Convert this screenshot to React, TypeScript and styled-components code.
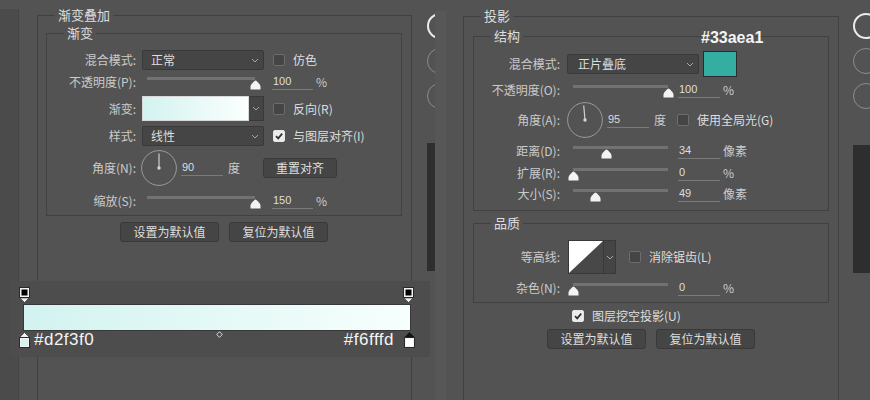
import styled, { createGlobalStyle } from "styled-components";

const colors = {
    page: "#535353",
    edge: "#4b4b4b",
    edgeLine: "#444444",
    band: "#575757",
    groupLine: "#414141",
    field: "#454545",
    fieldLine: "#393939",
    label: "#cbcbcb",
    text: "#dedede",
    track: "#727272",
    underline: "#7a7a7a",
    dial: "#9a9a9a",
    checkLine: "#6d6d6d",
    railBar: "#2e2e2e",
    editor: "#4d4d4d",
    white: "#f4f4f4",
};

const GlobalStyle = createGlobalStyle`
    html, body {
        margin: 0;
        padding: 0;
        background: ${colors.page};
    }
    body {
        font-family: "Noto Sans CJK SC", "Liberation Sans", sans-serif;
    }
`;

const Screen = styled.div`
    position: relative;
    display: flex;
    width: 870px;
    height: 400px;
    overflow: hidden;
    background: ${colors.page};
    font-family: "Noto Sans CJK SC", "Liberation Sans", sans-serif;
    font-size: 12px;
    line-height: 16px;
    color: ${colors.label};
`;

const EdgeStrip = styled.div`
    flex: none;
    width: 18px;
    margin-top: 9px;
    background: ${colors.edge};
    border-right: 1px solid ${colors.edgeLine};
`;

const Pane = styled.div<{ $w: number; $pl: number; $pt: number }>`
    flex: none;
    box-sizing: border-box;
    width: ${(p) => p.$w}px;
    padding-left: ${(p) => p.$pl}px;
    padding-top: ${(p) => p.$pt}px;
`;

const Band = styled.div`
    flex: none;
    width: 11px;
    margin-top: 11px;
    background: ${colors.band};
`;

/* strip of round layer-style buttons cut off by the window edge */
const Rail = styled.div<{ $w: number; $pl: number }>`
    flex: none;
    box-sizing: border-box;
    width: ${(p) => p.$w}px;
    padding-left: ${(p) => p.$pl}px;
    padding-top: 13px;
    overflow: hidden;
    display: flex;
    flex-direction: column;
    gap: 9px;
`;

const Ring = styled.span<{ $bright?: boolean }>`
    flex: none;
    box-sizing: border-box;
    width: 26px;
    height: 26px;
    border-radius: 50%;
    border: ${(p) => (p.$bright ? "2px solid #ececec" : "1px solid #8c8c8c")};
`;

const RailBar = styled.span<{ $mt: number }>`
    flex: none;
    width: 24px;
    height: 128px;
    margin-top: ${(p) => p.$mt}px;
    background: ${colors.railBar};
`;

const Group = styled.fieldset<{ $w: number; $h?: number; $mt?: number }>`
    box-sizing: border-box;
    width: ${(p) => p.$w}px;
    ${(p) => (p.$h ? `height: ${p.$h}px;` : "")}
    margin: ${(p) => p.$mt ?? 0}px 0 0 0;
    padding: 0;
    min-width: 0;
    border: 1px solid ${colors.groupLine};
`;

const Legend = styled.legend`
    margin-left: 17px;
    padding: 0 3px;
    font-size: 13px;
    line-height: 16px;
    color: ${colors.text};
`;

const Body = styled.div<{ $pad: string }>`
    padding: ${(p) => p.$pad};
`;

const Row = styled.div<{ $h: number }>`
    display: flex;
    align-items: center;
    height: ${(p) => p.$h}px;
`;

const Label = styled.span<{ $w: number }>`
    flex: none;
    width: ${(p) => p.$w}px;
    text-align: right;
    white-space: nowrap;
`;

const Select = styled.div<{ $w: number; $ml: number; $pl: number }>`
    flex: none;
    box-sizing: border-box;
    display: flex;
    align-items: center;
    justify-content: space-between;
    width: ${(p) => p.$w}px;
    height: 20px;
    margin-left: ${(p) => p.$ml}px;
    padding: 0 4px 0 ${(p) => p.$pl}px;
    background: ${colors.field};
    border: 1px solid ${colors.fieldLine};
    border-radius: 2px;
    color: ${colors.text};
`;

const SliderBox = styled.div<{ $w: number; $ml: number }>`
    position: relative;
    flex: none;
    width: ${(p) => p.$w}px;
    height: 13px;
    margin-left: ${(p) => p.$ml}px;
    margin-top: 3px;
`;

const Track = styled.div`
    height: 3px;
    background: ${colors.track};
`;

const Thumb = styled.svg`
    position: absolute;
    top: 3px;
    margin-left: -5.5px;
`;

const Value = styled.span<{ $w: number; $ml: number }>`
    flex: none;
    box-sizing: border-box;
    width: ${(p) => p.$w}px;
    height: 16px;
    margin-left: ${(p) => p.$ml}px;
    padding-left: 1px;
    border-bottom: 1px solid ${colors.underline};
    font-family: "Liberation Sans", "Noto Sans CJK SC", sans-serif;
    font-size: 11px;
    line-height: 15px;
    color: ${colors.text};
`;

const Unit = styled.span<{ $ml: number }>`
    flex: none;
    margin-left: ${(p) => p.$ml}px;
    white-space: nowrap;
`;

const Box = styled.span<{ $on?: boolean; $ml: number }>`
    flex: none;
    box-sizing: border-box;
    display: flex;
    align-items: center;
    justify-content: center;
    width: 12px;
    height: 12px;
    margin-left: ${(p) => p.$ml}px;
    border-radius: 2px;
    border: 1px solid ${(p) => (p.$on ? "#e6e6e6" : colors.checkLine)};
    background: ${(p) => (p.$on ? "#ececec" : colors.field)};
`;

const CheckText = styled.span`
    flex: none;
    margin-left: 8px;
    white-space: nowrap;
    color: ${colors.text};
`;

const DialSvg = styled.svg<{ $ml: number }>`
    flex: none;
    margin-left: ${(p) => p.$ml}px;
`;

const Button = styled.button<{ $w: number; $ml?: number }>`
    flex: none;
    box-sizing: border-box;
    width: ${(p) => p.$w}px;
    height: 20px;
    margin: 0 0 0 ${(p) => p.$ml ?? 0}px;
    padding: 0;
    background: ${colors.field};
    border: 1px solid ${colors.fieldLine};
    border-radius: 3px;
    font-family: inherit;
    font-size: 12px;
    line-height: 18px;
    color: ${colors.text};
`;

const ButtonRow = styled.div`
    display: flex;
    justify-content: center;
    gap: 10px;
    margin-top: 6px;
`;

const CheckRow = styled.div<{ $pl: number }>`
    display: flex;
    align-items: center;
    height: 14px;
    margin-top: 6px;
    padding-left: ${(p) => p.$pl}px;
`;

const GradientPicker = styled.div`
    flex: none;
    display: flex;
    width: 122px;
    height: 25px;
    margin-left: 6px;
`;

const GradientFill = styled.div`
    flex: 1;
    border: 1px solid #d8d8d8;
    background: linear-gradient(to right, #d2f3f0, #fbfffe);
`;

const DropPart = styled.div<{ $w: number }>`
    flex: none;
    display: flex;
    align-items: center;
    justify-content: center;
    width: ${(p) => p.$w}px;
    background: ${colors.field};
    border: 1px solid ${colors.fieldLine};
    border-left: none;
`;

const SwatchWrap = styled.div`
    position: relative;
    flex: none;
    margin-left: 4px;
`;

const Swatch = styled.div<{ $color: string }>`
    box-sizing: border-box;
    width: 34px;
    height: 26px;
    background: ${(p) => p.$color};
    border: 1px solid #2c2c2c;
`;

const HexNote = styled.span<{ $size: number }>`
    font-family: "Liberation Sans", "DejaVu Sans", sans-serif;
    font-size: ${(p) => p.$size}px;
    line-height: 16px;
    color: ${colors.white};
    white-space: nowrap;
`;

const SwatchNote = styled(HexNote)`
    position: absolute;
    left: -2px;
    bottom: 100%;
    margin-bottom: 5px;
    font-weight: 700;
`;

const Contour = styled.div`
    flex: none;
    display: flex;
    height: 34px;
    margin-left: 8px;
`;

const ContourArt = styled.svg`
    display: block;
    border: 1px solid ${colors.fieldLine};
`;

/* gradient editor strip floating over the left dialog */
const Editor = styled.div`
    position: absolute;
    left: 10px;
    top: 281px;
    box-sizing: border-box;
    width: 420px;
    height: 76px;
    padding-top: 6px;
    background: ${colors.editor};
`;

const StopRow = styled.div<{ $pl: number; $pr: number; $mt?: number }>`
    display: flex;
    align-items: center;
    height: 16px;
    margin-top: ${(p) => p.$mt ?? 0}px;
    padding: 0 ${(p) => p.$pr}px 0 ${(p) => p.$pl}px;
`;

const StopGap = styled.span`
    flex: 1;
`;

const Bar = styled.div`
    box-sizing: border-box;
    width: 388px;
    height: 27px;
    margin: 1px 0 0 13px;
    border: 1px solid #383838;
    background: linear-gradient(to right, #d2f3f0, #f6fffd);
`;

const Mid = styled.svg`
    align-self: flex-start;
    margin-top: -1px;
`;

const Chevron = () => (
    <svg width="8" height="5" viewBox="0 0 8 5">
        <path d="M1 1 L4 4 L7 1" fill="none" stroke="#a6a6a6" strokeWidth="1" />
    </svg>
);

const Tick = () => (
    <svg width="10" height="10" viewBox="0 0 10 10">
        <path d="M2 5.2 L4.2 7.4 L8.2 2.6" fill="none" stroke="#2f2f2f" strokeWidth="1.7" />
    </svg>
);

const Check = ({ on, ml, text }: { on?: boolean; ml: number; text: string }) => (
    <>
        <Box $on={on} $ml={ml}>{on && <Tick />}</Box>
        <CheckText>{text}</CheckText>
    </>
);

const Slider = ({ w, ml, pos }: { w: number; ml: number; pos: number }) => (
    <SliderBox $w={w} $ml={ml}>
        <Track />
        <Thumb width="11" height="10" viewBox="0 0 11 10" style={{ left: `${pos * 100}%` }}>
            <path
                d="M5.5 0.6 C6.6 0.6 10.5 5 10.5 6.4 V9.6 H0.5 V6.4 C0.5 5 4.4 0.6 5.5 0.6 Z"
                fill="#f3f3f3"
            />
        </Thumb>
    </SliderBox>
);

const Dial = ({ angle, ml }: { angle: number; ml: number }) => {
    const rad = (angle * Math.PI) / 180;
    const x = 18 + 14.5 * Math.cos(rad);
    const y = 18 - 14.5 * Math.sin(rad);
    return (
        <DialSvg $ml={ml} width="36" height="36" viewBox="0 0 36 36">
            <circle cx="18" cy="18" r="17.4" fill="none" stroke={colors.dial} strokeWidth="1" />
            <line x1="18" y1="18" x2={x} y2={y} stroke="#cfcfcf" strokeWidth="1.2" />
            <circle cx="18" cy="18" r="1.7" fill="#d6d6d6" />
        </DialSvg>
    );
};

const TopStop = () => (
    <svg width="11" height="16" viewBox="0 0 11 16">
        <rect x="0.5" y="0.5" width="10" height="10" fill="#f2f2f2" stroke="#2a2a2a" />
        <rect x="2.5" y="2.5" width="6" height="6" fill="#000" />
        <path d="M1 11 H10 L5.5 15.5 Z" fill="#f2f2f2" stroke="#2a2a2a" strokeWidth="0.6" />
    </svg>
);

const BottomStop = ({ fill, active, ml }: { fill: string; active?: boolean; ml?: number }) => (
    <svg width="11" height="16" viewBox="0 0 11 16" style={{ marginLeft: ml ?? 0, flex: "none" }}>
        <path
            d="M5.5 0.5 L10.5 5.5 H0.5 Z"
            fill={active ? "#111" : "#f2f2f2"}
            stroke={active ? "#111" : "#2a2a2a"}
            strokeWidth="0.6"
        />
        <rect x="0.5" y="5.5" width="10" height="10" fill="#f2f2f2" stroke="#2a2a2a" />
        <rect x="2" y="7" width="7" height="7" fill={fill} />
    </svg>
);

export default function App() {
    return (
        <>
            <GlobalStyle />
            <Screen>
                <EdgeStrip />

                <Pane $w={408} $pl={18} $pt={7}>
                    <Group $w={375} $h={440}>
                        <Legend>渐变叠加</Legend>
                        <Body $pad="0 9px 0 8px">
                            <Group $w={356} $mt={2}>
                                <Legend>渐变</Legend>
                                <Body $pad="9px 0 0 0">
                                    <Row $h={20}>
                                        <Label $w={89}>混合模式:</Label>
                                        <Select $w={122} $ml={6} $pl={8}>
                                            正常
                                            <Chevron />
                                        </Select>
                                        <Check ml={9} text="仿色" />
                                    </Row>
                                    <Row $h={24}>
                                        <Label $w={89}>不透明度(P):</Label>
                                        <Slider w={108} ml={11} pos={1} />
                                        <Value $w={41} $ml={17}>100</Value>
                                        <Unit $ml={3}>%</Unit>
                                    </Row>
                                    <Row $h={29}>
                                        <Label $w={89}>渐变:</Label>
                                        <GradientPicker>
                                            <GradientFill />
                                            <DropPart $w={14}>
                                                <Chevron />
                                            </DropPart>
                                        </GradientPicker>
                                        <Check ml={9} text="反向(R)" />
                                    </Row>
                                    <Row $h={26}>
                                        <Label $w={89}>样式:</Label>
                                        <Select $w={122} $ml={6} $pl={8}>
                                            线性
                                            <Chevron />
                                        </Select>
                                        <Check on ml={9} text="与图层对齐(I)" />
                                    </Row>
                                    <Row $h={38}>
                                        <Label $w={89}>角度(N):</Label>
                                        <Dial angle={90} ml={5} />
                                        <Value $w={42} $ml={4}>90</Value>
                                        <Unit $ml={5}>度</Unit>
                                        <Button $w={74} $ml={23}>重置对齐</Button>
                                    </Row>
                                    <Row $h={28}>
                                        <Label $w={89}>缩放(S):</Label>
                                        <Slider w={108} ml={11} pos={1} />
                                        <Value $w={41} $ml={17}>150</Value>
                                        <Unit $ml={3}>%</Unit>
                                    </Row>
                                </Body>
                            </Group>
                            <ButtonRow>
                                <Button $w={99}>设置为默认值</Button>
                                <Button $w={99}>复位为默认值</Button>
                            </ButtonRow>
                        </Body>
                    </Group>
                </Pane>

                <Rail $w={8} $pl={0}>
                    <Ring $bright />
                    <Ring />
                    <Ring />
                    <RailBar $mt={25} />
                </Rail>

                <Band />

                <Pane $w={393} $pl={17} $pt={8}>
                    <Group $w={376} $h={440}>
                        <Legend>投影</Legend>
                        <Body $pad="0 9px 0 9px">
                            <Group $w={356} $mt={4}>
                                <Legend>结构</Legend>
                                <Body $pad="7px 0 4px 0">
                                    <Row $h={26}>
                                        <Label $w={86}>混合模式:</Label>
                                        <Select $w={132} $ml={7} $pl={10}>
                                            正片叠底
                                            <Chevron />
                                        </Select>
                                        <SwatchWrap>
                                            <SwatchNote $size={16}>#33aea1</SwatchNote>
                                            <Swatch $color="#33aea1" />
                                        </SwatchWrap>
                                    </Row>
                                    <Row $h={25}>
                                        <Label $w={86}>不透明度(O):</Label>
                                        <Slider w={95} ml={13} pos={1} />
                                        <Value $w={42} $ml={10}>100</Value>
                                        <Unit $ml={3}>%</Unit>
                                    </Row>
                                    <Row $h={36}>
                                        <Label $w={86}>角度(A):</Label>
                                        <Dial angle={95} ml={7} />
                                        <Value $w={42} $ml={4}>95</Value>
                                        <Unit $ml={5}>度</Unit>
                                        <Check ml={11} text="使用全局光(G)" />
                                    </Row>
                                    <Row $h={26}>
                                        <Label $w={86}>距离(D):</Label>
                                        <Slider w={95} ml={13} pos={0.35} />
                                        <Value $w={42} $ml={10}>34</Value>
                                        <Unit $ml={3}>像素</Unit>
                                    </Row>
                                    <Row $h={18}>
                                        <Label $w={86}>扩展(R):</Label>
                                        <Slider w={95} ml={13} pos={0} />
                                        <Value $w={42} $ml={10}>0</Value>
                                        <Unit $ml={3}>%</Unit>
                                    </Row>
                                    <Row $h={24}>
                                        <Label $w={86}>大小(S):</Label>
                                        <Slider w={95} ml={13} pos={0.24} />
                                        <Value $w={42} $ml={10}>49</Value>
                                        <Unit $ml={3}>像素</Unit>
                                    </Row>
                                </Body>
                            </Group>
                            <Group $w={356} $mt={4}>
                                <Legend>品质</Legend>
                                <Body $pad="9px 0 0 0">
                                    <Row $h={34}>
                                        <Label $w={86}>等高线:</Label>
                                        <Contour>
                                            <ContourArt width="34" height="32" viewBox="0 0 34 32">
                                                <rect width="34" height="32" fill="#484848" />
                                                <path d="M0 0 H34 L0 32 Z" fill="#ffffff" />
                                            </ContourArt>
                                            <DropPart $w={11}>
                                                <Chevron />
                                            </DropPart>
                                        </Contour>
                                        <Check ml={13} text="消除锯齿(L)" />
                                    </Row>
                                    <Row $h={28}>
                                        <Label $w={86}>杂色(N):</Label>
                                        <Slider w={95} ml={13} pos={0} />
                                        <Value $w={42} $ml={10}>0</Value>
                                        <Unit $ml={3}>%</Unit>
                                    </Row>
                                </Body>
                            </Group>
                            <CheckRow $pl={99}>
                                <Check on ml={0} text="图层挖空投影(U)" />
                            </CheckRow>
                            <ButtonRow>
                                <Button $w={99}>设置为默认值</Button>
                                <Button $w={99}>复位为默认值</Button>
                            </ButtonRow>
                        </Body>
                    </Group>
                </Pane>

                <Rail $w={31} $pl={14}>
                    <Ring $bright />
                    <Ring />
                    <Ring />
                    <RailBar $mt={27} />
                </Rail>

                <Editor>
                    <StopRow $pl={9} $pr={16}>
                        <TopStop />
                        <StopGap />
                        <TopStop />
                    </StopRow>
                    <Bar />
                    <StopRow $pl={9} $pr={15} $mt={1}>
                        <BottomStop fill="#d2f3f0" />
                        <HexNote $size={17} style={{ marginLeft: 4, letterSpacing: 0.5 }}>
                            #d2f3f0
                        </HexNote>
                        <StopGap />
                        <Mid width="7" height="7" viewBox="0 0 7 7">
                            <path d="M3.5 0.7 L6.3 3.5 L3.5 6.3 L0.7 3.5 Z" fill="none" stroke="#dcdcdc" strokeWidth="1" />
                        </Mid>
                        <StopGap />
                        <HexNote $size={17} style={{ letterSpacing: 0.5 }}>
                            #f6fffd
                        </HexNote>
                        <BottomStop fill="#ffffff" active ml={10} />
                    </StopRow>
                </Editor>
            </Screen>
        </>
    );
}
